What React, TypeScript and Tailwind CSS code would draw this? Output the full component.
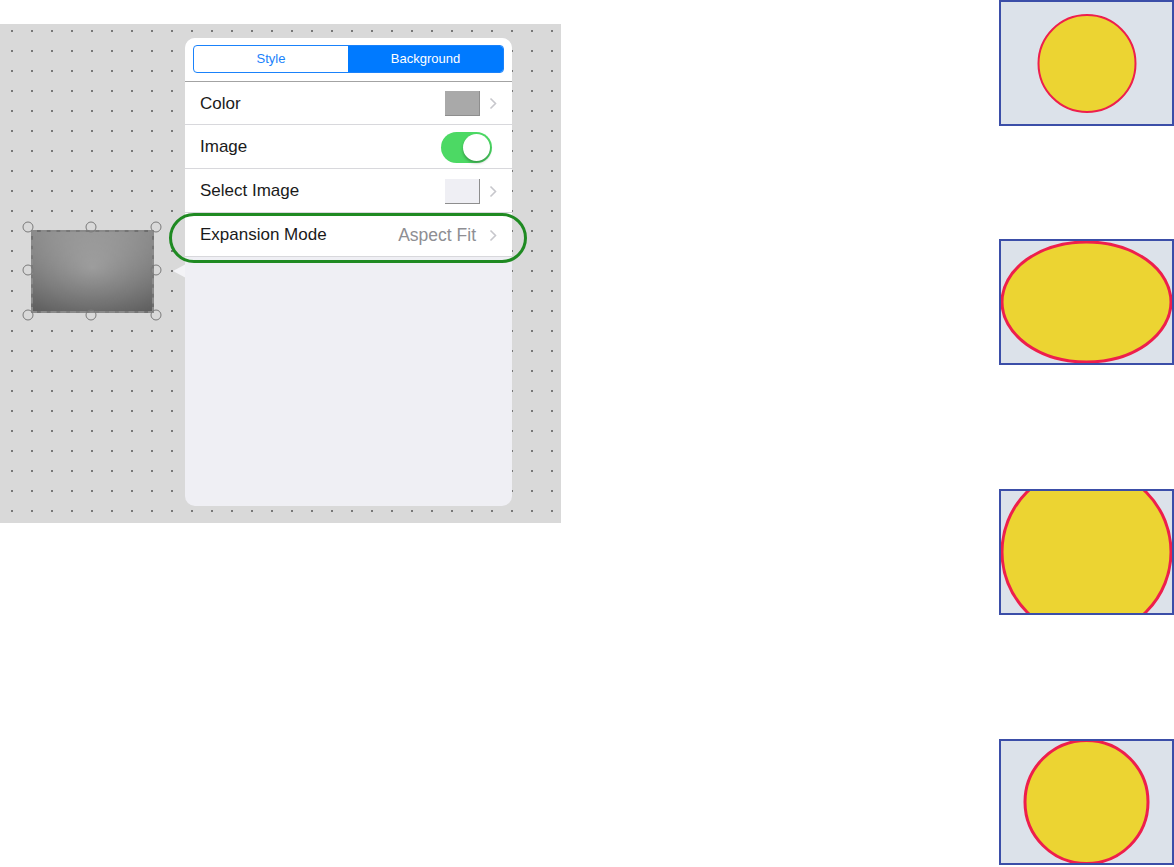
import React from "react";

function Chevron({ className = "ml-[9px]" }: { className?: string }) {
  return (
    <svg width="8" height="13" viewBox="0 0 8 13" className={className}>
      <path d="M1.5 1.5 L6.5 6.5 L1.5 11.5" fill="none" stroke="#c7c7cc" strokeWidth="1.6" />
    </svg>
  );
}

function Handle({ x, y }: { x: number; y: number }) {
  return (
    <div
      className="absolute w-[11px] h-[11px] rounded-full border border-[#7a7a7a] -translate-x-1/2 -translate-y-1/2"
      style={{ left: x, top: y }}
    />
  );
}

function Box({ children }: { children: React.ReactNode }) {
  return (
    <div className="w-[175px] h-[126px] border-2 border-[#3b4ea8] bg-[#dce2ea] overflow-hidden relative">
      {children}
    </div>
  );
}

export default function App() {
  return (
    <div className="w-[1174px] h-[867px] bg-white relative overflow-hidden font-['Liberation_Sans',Arial,sans-serif] flex">
      {/* left canvas */}
      <div className="pt-[24px] w-[561px]">
        <div className="relative w-[561px] h-[499px] bg-[#d9d9d9] bg-[radial-gradient(circle_at_12px_7px,#2a2a2a_0.45px,rgba(80,80,80,0.5)_0.8px,transparent_1.2px)] bg-[size:20px_20px]">
          {/* selected image */}
          <div className="absolute left-[31px] top-[206px] w-[123px] h-[83px] border-2 border-dashed border-[#8a8a8a] bg-[radial-gradient(ellipse_at_50%_45%,#9a9a9a_0%,#7e7e7e_60%,#6a6a6a_100%)]">
            <div className="absolute inset-0 bg-[linear-gradient(to_bottom,rgba(255,255,255,0.2),rgba(0,0,0,0.12))]" />
          </div>
          <Handle x={28} y={203} />
          <Handle x={91} y={203} />
          <Handle x={156} y={203} />
          <Handle x={28} y={246} />
          <Handle x={156} y={246} />
          <Handle x={28} y={291} />
          <Handle x={91} y={291} />
          <Handle x={156} y={291} />

          {/* popover arrow */}
          <div className="absolute left-[173px] top-[240px] w-0 h-0 border-y-[7px] border-y-transparent border-r-[13px] border-r-[#f3f3f6]" />

          {/* popover */}
          <div className="absolute left-[185px] top-[14px] w-[327px] h-[468px] rounded-[10px] bg-[#efeff4] overflow-hidden flex flex-col">
            <div className="bg-white px-[8px] pt-[7px] pb-[8px] border-b border-[#a3a3a3]">
              <div className="flex h-[28px] border border-[#1a82fb] rounded-[4px] overflow-hidden text-[13px]">
                <div className="w-[154px] flex items-center justify-center text-[#1a82fb]">Style</div>
                <div className="flex-1 flex items-center justify-center bg-[#007aff] text-white">Background</div>
              </div>
            </div>
            <div className="bg-white text-[17px] text-[#1a1a1a]">
              <div className="h-[43px] flex items-center pt-[1px] pl-[15px] pr-[15px] border-b border-[#d8d8dc]">
                <span className="flex-1">Color</span>
                <div className="w-[35px] h-[25px] bg-[#a9a9a9] border-r border-b border-[#8e8e8e]" />
                <Chevron />
              </div>
              <div className="h-[44px] flex items-center pt-[1px] pl-[15px] pr-[20px] border-b border-[#d8d8dc]">
                <span className="flex-1">Image</span>
                <div className="w-[51px] h-[31px] rounded-full bg-[#4cd964] relative">
                  <div className="absolute right-[2px] top-[2px] w-[27px] h-[27px] rounded-full bg-white shadow-[0_2px_3px_rgba(0,0,0,0.3)]" />
                </div>
              </div>
              <div className="h-[44px] flex items-center pt-[1px] pl-[15px] pr-[15px] border-b border-[#d8d8dc]">
                <span className="flex-1">Select Image</span>
                <div className="w-[35px] h-[25px] bg-[#efeff4] border-r border-b border-[#8e8e8e]" />
                <Chevron />
              </div>
              <div className="h-[44px] flex items-center pt-[1px] pl-[15px] pr-[15px] border-b border-[#d8d8dc]">
                <span className="flex-1">Expansion Mode</span>
                <span className="text-[#8e8e93] text-[17.5px]">Aspect Fit</span>
                <Chevron className="ml-[13px]" />
              </div>
            </div>
          </div>

          {/* green highlight */}
          <div className="absolute left-[169px] top-[189px] w-[358px] h-[50px] rounded-[25px] border-[3px] border-[#1f8a22]" />
        </div>
      </div>

      {/* right column */}
      <div className="ml-[438px] flex flex-col">
        <Box>
          <svg width="171" height="122" className="absolute left-0 top-0">
            <circle cx="86" cy="61.5" r="48.5" fill="#ecd432" stroke="#ee1f4c" strokeWidth="2" />
          </svg>
        </Box>
        <div className="h-[113px]" />
        <Box>
          <svg width="171" height="122" className="absolute left-0 top-0">
            <ellipse cx="85.5" cy="61" rx="84.5" ry="60" fill="#ecd432" stroke="#ee1f4c" strokeWidth="3" />
          </svg>
        </Box>
        <div className="h-[124px]" />
        <Box>
          <svg width="171" height="122" className="absolute left-0 top-0">
            <circle cx="85.5" cy="61" r="84.5" fill="#ecd432" stroke="#ee1f4c" strokeWidth="3" />
          </svg>
        </Box>
        <div className="h-[124px]" />
        <Box>
          <svg width="171" height="122" className="absolute left-0 top-0">
            <circle cx="85.5" cy="61" r="61.5" fill="#ecd432" stroke="#ee1f4c" strokeWidth="3" />
          </svg>
        </Box>
      </div>
    </div>
  );
}
